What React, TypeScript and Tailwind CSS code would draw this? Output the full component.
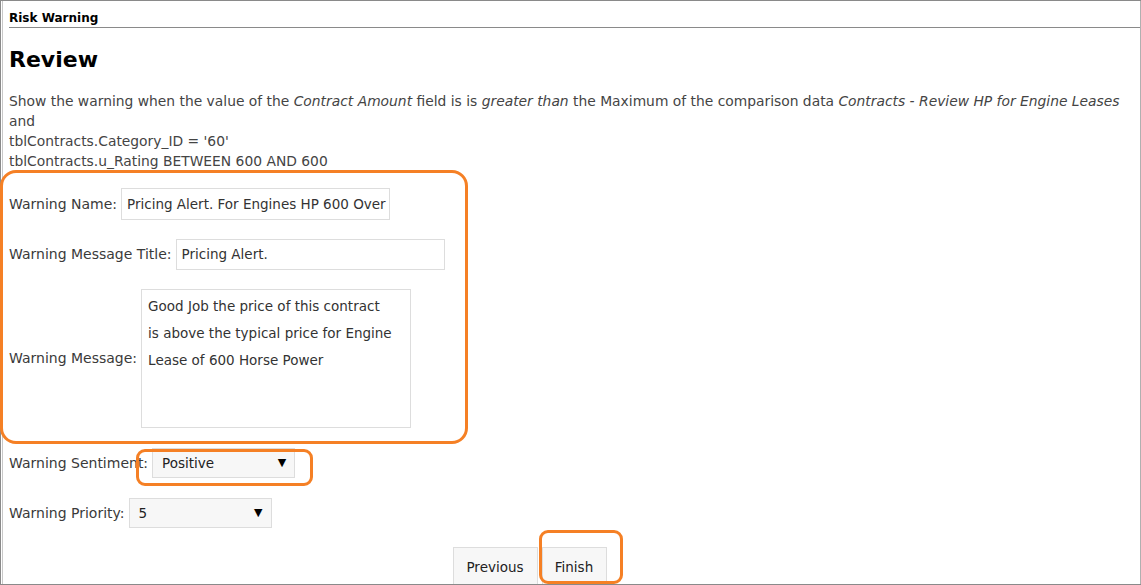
import React from 'react';

const font = { fontFamily: '"DejaVu Sans", "Liberation Sans", sans-serif' };

function Select({ value, width }: { value: string; width: string }) {
  return (
    <div
      className={`${width} h-[30px] flex items-center justify-between bg-[#f7f7f7] border border-[#dddddd] pl-[9px] pr-[8px] text-[13.5px] text-[#222]`}
    >
      <span>{value}</span>
      <span className="text-[11px] text-black">▼</span>
    </div>
  );
}

function Row({ label, children, className = '' }: { label: string; children: React.ReactNode; className?: string }) {
  return (
    <div className={`flex items-center gap-[4px] ${className}`}>
      <span className="text-[14px] text-[#3a3a3a] whitespace-nowrap">{label}</span>
      {children}
    </div>
  );
}

export default function App() {
  return (
    <div
      style={font}
      className="relative w-[1141px] h-[585px] overflow-hidden bg-white border-t border-b border-[#8a8a8a]"
    >
      <div className="flex h-full">
        <div className="w-px bg-[#8a8a8a]" />
        <div className="w-px" />
        <div className="w-px bg-[#c8c8c8]" />
        <div className="flex-1 pl-[6px] flex flex-col">
          {/* header */}
          <div className="h-[28px] border-b border-[#8a8a8a] flex items-center pt-[8px]">
            <span className="text-[12px] font-bold text-black">Risk Warning</span>
          </div>
          <h1 className="text-[22px] font-bold text-black leading-none mt-[21px]">Review</h1>

          <div className="mt-[20px] text-[13.85px] leading-[20px] text-[#444] pr-[6px]">
            <p className="whitespace-nowrap">
              Show the warning when the value of the <i>Contract Amount</i> field is is <i>greater than</i> the
              Maximum of the comparison data <i>Contracts - Review HP for Engine Leases</i>
            </p>
            <p>and</p>
            <p>tblContracts.Category_ID = '60'</p>
            <p>tblContracts.u_Rating BETWEEN 600 AND 600</p>
          </div>

          <div className="flex flex-col mt-[17px]">
            <Row label="Warning Name:">
              <div className="w-[269px] h-[32px] border border-[#dddddd] flex items-center px-[5px] text-[13.5px] text-[#333] whitespace-nowrap overflow-hidden">
                Pricing Alert. For Engines HP 600 Over
              </div>
            </Row>
            <Row label="Warning Message Title:" className="mt-[19px]">
              <div className="w-[269px] h-[31px] border border-[#dddddd] flex items-center px-[5px] text-[13.5px] text-[#333]">
                Pricing Alert.
              </div>
            </Row>
            <Row label="Warning Message:" className="mt-[19px]">
              <div className="w-[270px] h-[139px] border border-[#dddddd] px-[6px] pt-[3px] text-[13.5px] leading-[27px] text-[#333]">
                <p>Good Job the price of this contract</p>
                <p>is above the typical price for Engine</p>
                <p>Lease of 600 Horse Power</p>
              </div>
            </Row>
            <Row label="Warning Sentiment:" className="mt-[20px]">
              <Select value="Positive" width="w-[143px]" />
            </Row>
            <Row label="Warning Priority:" className="mt-[20px]">
              <Select value="5" width="w-[143px]" />
            </Row>
            <div className="flex justify-center gap-[4px] mt-[19px] pr-[90px]">
              <button className="h-[40px] w-[85px] bg-[#f7f7f7] border border-[#dddddd] text-[13.5px] text-[#222]">
                Previous
              </button>
              <button className="h-[40px] w-[65px] bg-[#f7f7f7] border border-[#dddddd] text-[13.5px] text-[#222]">
                Finish
              </button>
            </div>
          </div>
        </div>
        <div className="w-px bg-[#b0b0b0]" />
      </div>

      {/* orange annotation marks */}
      <div className="absolute left-0 top-[169px] w-[468px] h-[274px] border-[3px] border-[#f58025] rounded-[16px] pointer-events-none" />
      <div className="absolute left-[136px] top-[448px] w-[177px] h-[37px] border-[3px] border-[#f58025] rounded-[9px] pointer-events-none" />
      <div className="absolute left-[539px] top-[529px] w-[84px] h-[54px] border-[3px] border-[#f58025] rounded-[9px] pointer-events-none" />
    </div>
  );
}
